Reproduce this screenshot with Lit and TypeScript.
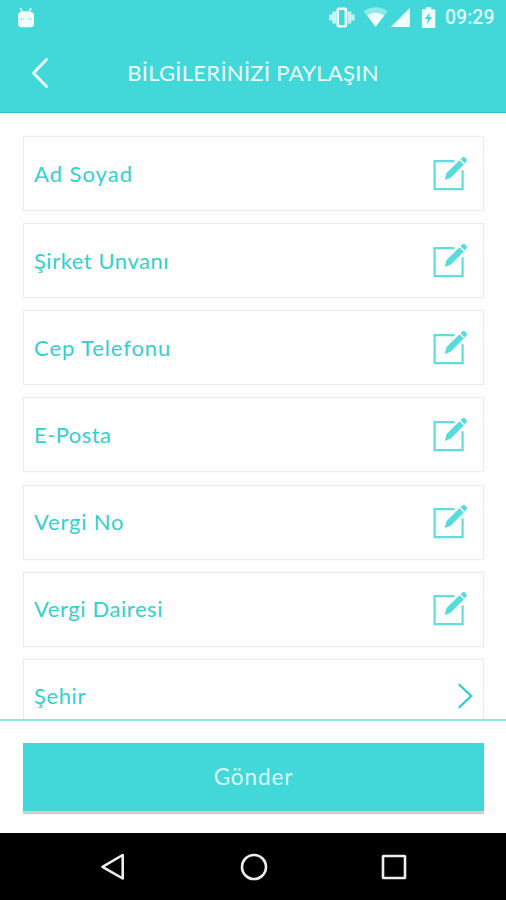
import { LitElement, html, css, svg } from "lit";
import { customElement } from "lit/decorators.js";

interface Field {
  label: string;
  spacing: number;
  kind: "edit" | "select";
}

const FIELDS: Field[] = [
  { label: "Ad Soyad", spacing: 1, kind: "edit" },
  { label: "Şirket Unvanı", spacing: 0.53, kind: "edit" },
  { label: "Cep Telefonu", spacing: 0.9, kind: "edit" },
  { label: "E-Posta", spacing: 0.45, kind: "edit" },
  { label: "Vergi No", spacing: 0.8, kind: "edit" },
  { label: "Vergi Dairesi", spacing: 0.57, kind: "edit" },
  { label: "Şehir", spacing: 0.6, kind: "select" },
];

const editIcon = html`<svg class="edit-icon" width="36" height="36" viewBox="0.5 0.7 36 36" fill="none">
  <path d="M23 5.9H3.1V33.9H31.1V15" stroke="#62dddd" stroke-width="2.2" />
  <path d="M13.2 24.6L15 17.800L28 4.900L32.300 9.200L19.200 22.500Z" fill="#58dbdb" />
  <path d="M29 3.900L31.100 1.900Q32.300 1 33.500 2.100L35 3.600Q36 4.800 35 6L33.200 8.100Z" fill="#58dbdb" />
</svg>`;

const chevronIcon = html`<svg width="18" height="28" viewBox="-0.5 0 18 28" fill="none">
  <path d="M2.2 2.2L14.7 14L2.2 25.8" stroke="#2fcccc" stroke-width="2.2" />
</svg>`;

@customElement("app-root")
export class AppRoot extends LitElement {
  static styles = css`
    :host {
      display: flex;
      flex-direction: column;
      width: 506px;
      height: 900px;
      overflow: hidden;
      background: #fefefe;
      font-family: Lato, "Open Sans", sans-serif;
    }
    svg { display: block; flex: none; }
    .top {
      flex: none;
      height: 113px;
      box-sizing: border-box;
      background: #42d8d9;
      border-bottom: 1px solid #2cc6cc;
      color: #effdfd;
    }
    .status {
      display: flex;
      align-items: center;
      height: 36px;
      padding: 0 11px 0 16px;
    }
    .grow { flex: 1; }
    .clock {
      font: 500 19.5px/36px Roboto, sans-serif;
      margin-left: 9px;
      width: 50px;
      white-space: nowrap;
      color: #defafa;
    }
    .header {
      display: grid;
      grid-template-columns: 80px 1fr 80px;
      align-items: center;
      height: 74px;
    }
    .back { margin-left: 30px; }
    .title {
      margin: 0;
      text-align: center;
      font-size: 22px;
      font-weight: 400;
      line-height: 30px;
      letter-spacing: 0.28px;
      white-space: nowrap;
    }
    .list {
      flex: 1;
      min-height: 0;
      overflow: hidden;
      padding: 23px 22px 0 23px;
      display: flex;
      flex-direction: column;
      gap: 12.17px;
    }
    .card {
      flex: none;
      box-sizing: border-box;
      height: 75px;
      border: 1px solid #ececec;
      box-shadow: 0 0 1px #eeeeee;
      display: flex;
      align-items: center;
      justify-content: space-between;
      padding: 0 15px 0 10px;
    }
    .card.select { padding-right: 9px; }
    .label {
      font-size: 22px;
      line-height: 30px;
      color: #36cfcf;
      white-space: nowrap;
    }
    .footer {
      flex: none;
      height: 114px;
      box-sizing: border-box;
      border-top: 2px solid #8fe4e5;
      padding: 22px 22px 0 23px;
    }
    .send {
      display: block;
      width: 100%;
      height: 68px;
      border: 0;
      padding: 0;
      background: #42d8d9;
      box-shadow: 0 3px 1px #cfcfcf;
      color: #d9fafa;
      font: 400 22.5px/68px Lato, sans-serif;
      letter-spacing: 0.9px;
    }
    .nav {
      flex: none;
      height: 67px;
      background: #000;
      display: flex;
      justify-content: space-between;
      align-items: center;
      padding: 0 98px 0 99px;
    }
  `;

  private statusIcons() {
    return html`
      <svg width="108" height="28" viewBox="328 4 108 28" fill="#effdfd">
        ${svg`
        <path d="M338.700 8.700H344.900Q345.900 8.700 345.900 9.700V25.200Q345.900 26.200 344.900 26.200H338.700Q337.700 26.200 337.700 25.200V9.700Q337.700 8.700 338.700 8.700Z" fill="none" stroke="#effdfd" stroke-width="2.600" />
        <path d="M332.300 11.500H336V23.500H332.300ZM347.600 11.500H351.300V23.500H347.600ZM329.200 14.500H332.300V20.500H329.200ZM351.300 14.500H354.600V20.500H351.300Z" fill="#c0f4f4" />
        <path d="M363.500 11.400Q375.600 3 387.700 11.400L384.300 15.600Q375.600 9.600 367 15.600Z" fill="#8ee9e9" />
        <path d="M367 15.400Q375.600 9.600 384.300 15.400L375.600 27Z" />
        <path d="M409.900 8V27H390.800Z" />
        <path d="M425.900 7.200H431.200V9.200H434.400Q435.300 9.200 435.300 10V27Q435.300 27.900 434.400 27.900H422.800Q421.900 27.900 421.900 27V10Q421.900 9.200 422.800 9.200H425.900Z" />
        <path d="M430 12.200L424.700 19H428L426.800 24.200L432 17.100H428.800Z" fill="#42d8d9" />
        `}
      </svg>
    `;
  }

  render() {
    return html`
      <div class="top">
        <div class="status">
          <svg width="20" height="24" viewBox="16 4 20 24">
            <path d="M20.500 6L22.500 10.500M31 6L29 10.500" stroke="#c9f6f6" stroke-width="1.800" />
            <path d="M18 12.500Q18.500 9.200 25.800 9.200Q33.500 9.200 34 12.500V21.500Q34 25.200 30.500 25.200H21.500Q18 25.200 18 21.500Z" fill="#effdfd" />
            <path d="M20.500 17H23.200M28.500 17H31.200" stroke="#8ee5e5" stroke-width="1.500" />
          </svg>
          <span class="grow"></span>
          ${this.statusIcons()}
          <span class="clock">09:29</span>
        </div>
        <div class="header">
          <svg class="back" width="20" height="34" viewBox="0 0 20 34" fill="none">
            <path d="M16.500 3.500L3.500 17L16.500 30.500" stroke="#effdfd" stroke-width="2.800" stroke-linecap="round" stroke-linejoin="round" />
          </svg>
          <h1 class="title">BİLGİLERİNİZİ PAYLAŞIN</h1>
        </div>
      </div>
      <div class="list">
        ${FIELDS.map(
          (f) => html`<div class="card ${f.kind}">
            <span class="label" style="letter-spacing:${f.spacing}px">${f.label}</span>
            ${f.kind === "edit" ? editIcon : chevronIcon}
          </div>`,
        )}
      </div>
      <div class="footer"><button class="send">Gönder</button></div>
      <div class="nav">
        <svg width="28" height="30" viewBox="0 0 28 30" fill="none">
          <path d="M23.700 3V26.500L3.500 14.800Z" stroke="#eee" stroke-width="2.600" stroke-linejoin="round" />
        </svg>
        <svg width="30" height="30" viewBox="0 0 30 30" fill="none">
          <circle cx="15" cy="15" r="12" stroke="#eee" stroke-width="2.600" />
        </svg>
        <svg width="28" height="28" viewBox="0 0 28 28" fill="none">
          <rect x="3" y="3" width="22" height="22" rx="0.600" stroke="#eee" stroke-width="2.600" />
        </svg>
      </div>
    `;
  }
}
